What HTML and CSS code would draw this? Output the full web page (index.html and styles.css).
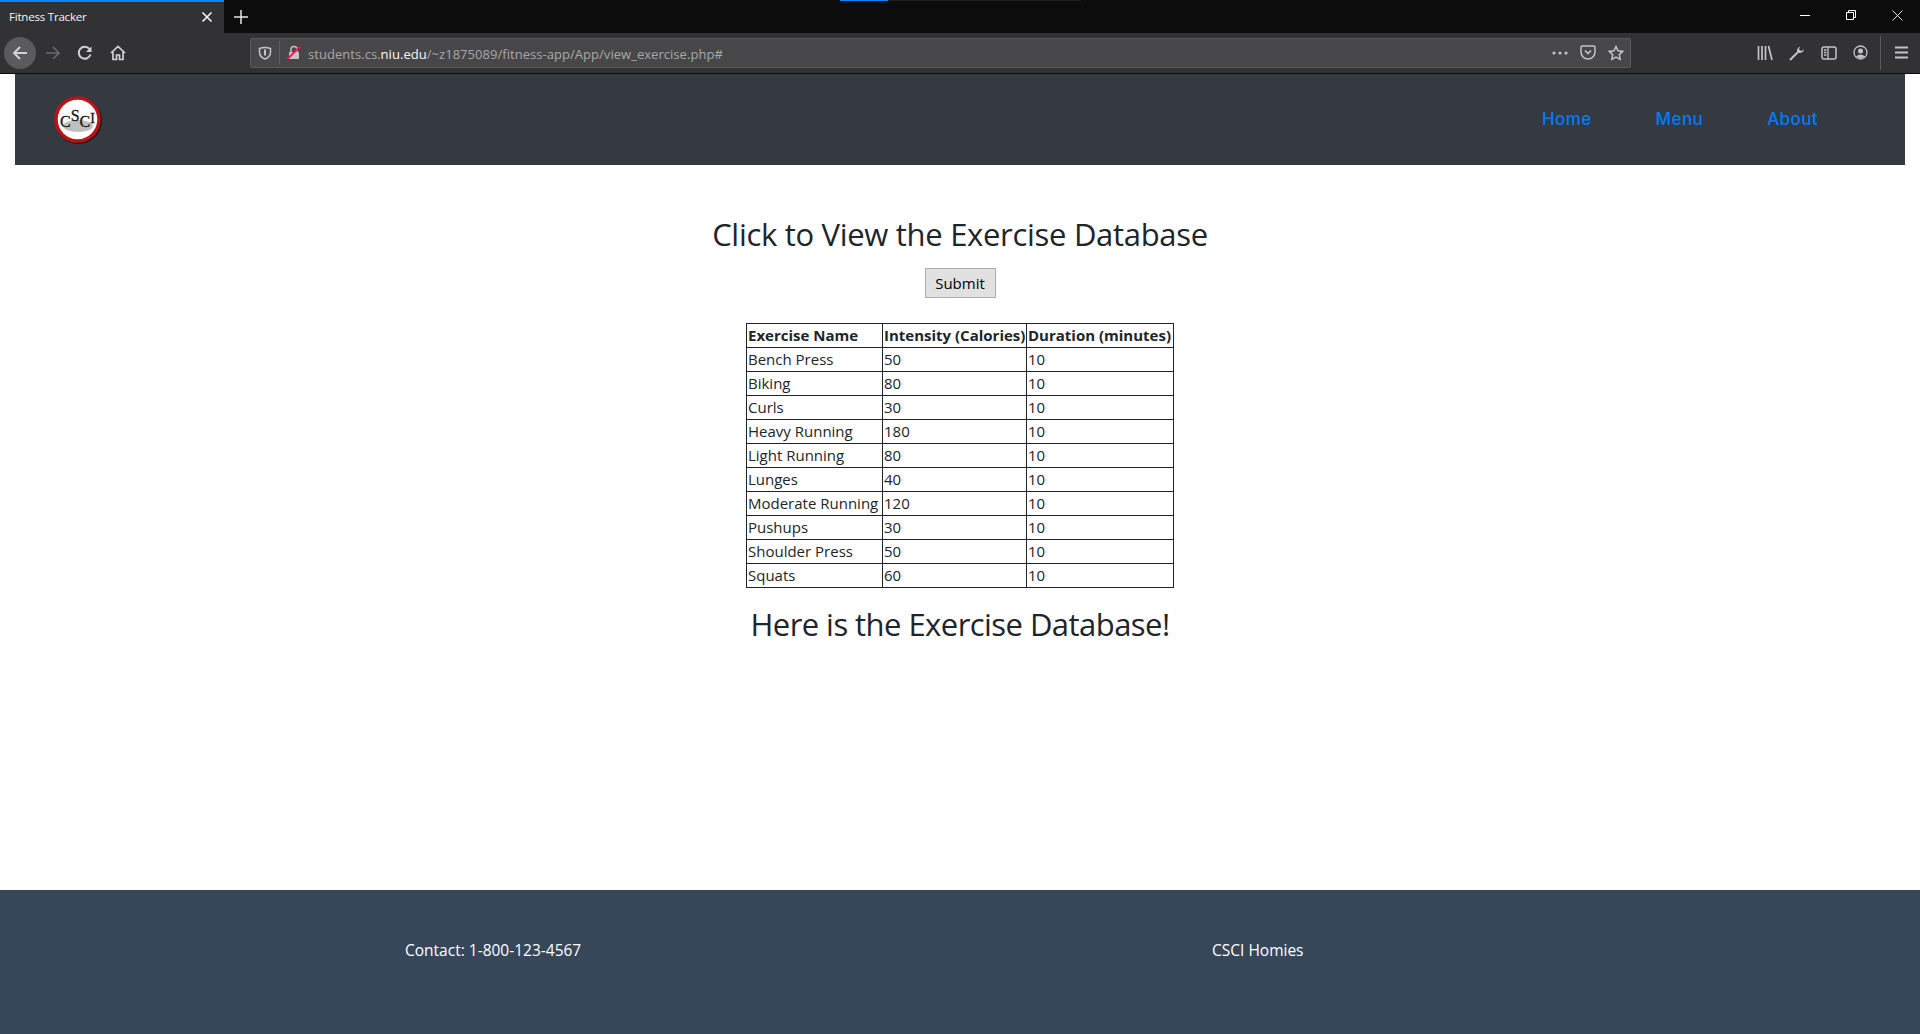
FILE: index.html
```html
<!DOCTYPE html>
<html lang="en">
<head>
<meta charset="utf-8">
<title>Fitness Tracker</title>
<link rel="stylesheet" href="styles.css">
</head>
<body>
<header class="chrome">
  <div class="tabbar">
    <div class="tab">
      <span class="tab-title">Fitness Tracker</span>
      <svg class="tab-close" width="12" height="12" viewBox="0 0 12 12"><path d="M1.500 1.500l9 9M10.500 1.500l-9 9" stroke="#f4f4f4" stroke-width="1.600" fill="none"/></svg>
    </div>
    <svg class="new-tab" width="14" height="14" viewBox="0 0 14 14"><path d="M7 0v14M0 7h14" stroke="#e6e6e6" stroke-width="1.500" fill="none"/></svg>
    <div class="tab-spacer"></div>
    <div class="winctl">
      <svg width="10" height="10" viewBox="0 0 10 10"><path d="M0 5.500h10" stroke="#fff" fill="none"/></svg>
      <svg width="10" height="10" viewBox="0 0 10 10"><path d="M.5 2.500h7v7h-7zM2.500 2.500V.5h7v7h-2" stroke="#fff" fill="none"/></svg>
      <svg width="11" height="11" viewBox="0 0 11 11"><path d="M.5.5l10 10M10.500.5l-10 10" stroke="#fff" stroke-width=".9" fill="none"/></svg>
    </div>
    <div class="loadbar"><span class="loadbar-done"></span></div>
  </div>
  <div class="toolbar">
    <div class="navgroup">
      <span class="tbtn tbtn-active"><svg width="16" height="16" viewBox="0 0 16 16"><path d="M15 8H2M8 2L2 8l6 6" stroke="#d2d2d3" stroke-width="2" fill="none"/></svg></span>
      <span class="tbtn"><svg width="16" height="16" viewBox="0 0 16 16"><path d="M1 8h13M8 2l6 6-6 6" stroke="#6a6a6b" stroke-width="1.700" fill="none"/></svg></span>
      <span class="tbtn"><svg width="16" height="16" viewBox="0 0 16 16"><path d="M13.500 9.500A6 6 0 1 1 12.500 4" stroke="#d2d2d3" stroke-width="2" fill="none"/><path d="M14.500 1.500v5.500H9z" fill="#d2d2d3"/></svg></span>
      <span class="tbtn"><svg width="16" height="16" viewBox="0 0 16 16"><path d="M1 8l7-6.500L15 8M3 7v7.500h3.500V10h3v4.500H13V7" stroke="#d2d2d3" stroke-width="1.700" fill="none"/></svg></span>
    </div>
    <div class="urlbar">
      <svg class="url-shield" width="14" height="14" viewBox="0 0 14 14"><path d="M1.500 2.500Q7 .5 12.500 2.500V6Q12.500 11 7 13 1.500 11 1.500 6z" stroke="#c4c4c5" stroke-width="1.500" fill="none"/><path d="M7 3.500v6" stroke="#c4c4c5" stroke-width="2"/></svg>
      <span class="url-sep"></span>
      <svg class="url-lock" width="14" height="15" viewBox="0 0 14 15"><path d="M4 7V4.500a3 3 0 0 1 6 0V7" stroke="#c4c4c5" stroke-width="1.500" fill="none"/><rect x="2" y="7" width="10" height="7" rx="1" fill="#c4c4c5"/><path d="M.5 14L13 1.500" stroke="#ff0f4d" stroke-width="1.800"/></svg>
      <span class="url-text">students.cs.<b class="url-host">niu.edu</b>/~z1875089/fitness-app/App/view_exercise.php#</span>
      <svg class="url-icon" width="16" height="4" viewBox="0 0 16 4"><circle cx="2" cy="2" r="1.600" fill="#c4c4c5"/><circle cx="8" cy="2" r="1.600" fill="#c4c4c5"/><circle cx="14" cy="2" r="1.600" fill="#c4c4c5"/></svg>
      <svg class="url-icon" width="16" height="15" viewBox="0 0 16 15"><path d="M1 2.500Q1 1 2.500 1h11Q15 1 15 2.500V7a7 7 0 0 1-14 0z" stroke="#c4c4c5" stroke-width="1.500" fill="none"/><path d="M5 5.500l3 3 3-3" stroke="#c4c4c5" stroke-width="1.700" fill="none"/></svg>
      <svg class="url-icon" width="16" height="16" viewBox="0 0 16 16"><path d="M8 1.500l2 4.300 4.700.6-3.400 3.200.9 4.700L8 12l-4.200 2.300.9-4.700L1.300 6.400 6 5.800z" stroke="#c4c4c5" stroke-width="1.500" fill="none"/></svg>
    </div>
    <div class="tools">
      <svg width="16" height="16" viewBox="0 0 16 16"><path d="M1.500 1v14M5 1v14M8.500 1v14M11.500 1l3.500 14" stroke="#c4c4c5" stroke-width="1.700" fill="none"/></svg>
      <svg width="16" height="16" viewBox="0 0 16 16"><path d="M1 15l7.500-7.500" stroke="#c4c4c5" stroke-width="2" fill="none"/><path d="M8 7.500Q7.500 3 11 1.500L10 4.500l2 1.500 3-1.500Q14 8.500 9 8z" fill="#c4c4c5"/></svg>
      <svg width="16" height="14" viewBox="0 0 16 14"><rect x="1" y="1" width="14" height="12" rx="2" stroke="#c4c4c5" stroke-width="1.500" fill="none"/><path d="M7 1v12M3 4h2.500M3 6.500h2.500M3 9h2.500" stroke="#c4c4c5" stroke-width="1.300" fill="none"/></svg>
      <svg width="15" height="15" viewBox="0 0 15 15"><circle cx="7.500" cy="7.500" r="6.500" stroke="#c4c4c5" stroke-width="1.300" fill="none"/><circle cx="7.500" cy="6" r="2.500" fill="#c4c4c5"/><path d="M3 11.500Q7.500 7.500 12 11.500 7.500 14.500 3 11.500z" fill="#c4c4c5"/></svg>
      <span class="tools-sep"></span>
      <svg width="13" height="13" viewBox="0 0 13 13"><path d="M0 1.500h13M0 6.500h13M0 11.500h13" stroke="#c4c4c5" stroke-width="1.800" fill="none"/></svg>
    </div>
  </div>
</header>

<nav class="navbar">
  <svg class="logo" width="50" height="50" viewBox="0 0 50 50">
    <circle cx="25.500" cy="25.500" r="23.500" fill="#1a1a1a"/>
    <circle cx="24.500" cy="24.500" r="21.500" fill="#fff" stroke="#bb1219" stroke-width="3.500"/>
    <ellipse cx="25" cy="31" rx="15" ry="6" fill="#a9a9a9" opacity=".75"/>
    <text class="logo-mark" x="7" y="32">C<tspan class="logo-s" dy="-6">S</tspan><tspan dy="6">C</tspan><tspan class="logo-i" dy="-4">I</tspan></text>
  </svg>
  <ul class="navlinks">
    <li><a class="navlink" href="#">Home</a></li>
    <li><a class="navlink" href="#">Menu</a></li>
    <li><a class="navlink" href="#">About</a></li>
  </ul>
</nav>

<main class="content">
  <h2 class="heading heading-top">Click to View the Exercise Database</h2>
  <button class="submit" type="button">Submit</button>
  <table class="exercises">
    <thead>
      <tr><th>Exercise Name</th><th>Intensity (Calories)</th><th>Duration (minutes)</th></tr>
    </thead>
    <tbody>
      <tr><td>Bench Press</td><td>50</td><td>10</td></tr>
      <tr><td>Biking</td><td>80</td><td>10</td></tr>
      <tr><td>Curls</td><td>30</td><td>10</td></tr>
      <tr><td>Heavy Running</td><td>180</td><td>10</td></tr>
      <tr><td>Light Running</td><td>80</td><td>10</td></tr>
      <tr><td>Lunges</td><td>40</td><td>10</td></tr>
      <tr><td>Moderate Running</td><td>120</td><td>10</td></tr>
      <tr><td>Pushups</td><td>30</td><td>10</td></tr>
      <tr><td>Shoulder Press</td><td>50</td><td>10</td></tr>
      <tr><td>Squats</td><td>60</td><td>10</td></tr>
    </tbody>
  </table>
  <h2 class="heading heading-bottom">Here is the Exercise Database!</h2>
</main>

<footer class="footer">
  <p class="footer-item">Contact: 1-800-123-4567</p>
  <p class="footer-item">CSCI Homies</p>
</footer>
</body>
</html>
```

FILE: styles.css
```css
* { box-sizing: border-box; }
html, body { margin: 0; height: 100%; }
html { overflow: hidden; }
body {
  display: flex;
  flex-direction: column;
  height: 1034px;
  overflow: hidden;
  background: #fff;
  color: #212529;
  font-family: "Open Sans", "Noto Sans", sans-serif;
  font-size: 16px;
}

/* Browser chrome */
.chrome { flex: none; }
.tabbar {
  position: relative;
  display: flex;
  align-items: center;
  height: 33px;
  background: #0c0c0c;
}
.tab {
  display: flex;
  align-items: center;
  justify-content: space-between;
  width: 224px;
  height: 33px;
  padding: 0 11px 2px 9px;
  background: #323234;
  border-top: 2px solid #0a84ff;
}
.tab-title { color: #f4f4f4; font-size: 11.5px; letter-spacing: -.2px; }
.new-tab { margin-left: 10px; }
.tab-spacer { flex: 1; }
.winctl {
  display: flex;
  align-items: center;
  gap: 36px;
  padding-right: 17px;
  margin-top: -3px;
}
.loadbar {
  position: absolute;
  top: 0;
  left: 840px;
  width: 241px;
  height: 1px;
  background: #1f1f1f;
}
.loadbar-done { display: block; width: 48px; height: 1px; background: #0a84ff; }

.toolbar {
  display: flex;
  align-items: center;
  height: 41px;
  padding-bottom: 1px;
  background: #323234;
  border-bottom: 1px solid #0c0c0c;
}
.navgroup {
  display: flex;
  align-items: center;
  gap: .6px;
  width: 250px;
  padding-left: 4px;
}
.tbtn {
  display: flex;
  align-items: center;
  justify-content: center;
  width: 32px;
  height: 32px;
  border-radius: 50%;
}
.tbtn-active { background: #5b5b5d; }
.urlbar {
  display: flex;
  align-items: center;
  flex: 1;
  height: 30px;
  padding: 0 6px 0 7px;
  background: #474749;
  border: 1px solid #5a5a5c;
  border-radius: 2px;
}
.url-sep { width: 1px; height: 24px; margin: 0 7px; background: #5f5f61; }
.url-lock { margin-right: 7px; }
.url-text {
  flex: 1;
  padding-top: 2px;
  color: #a7a7a8;
  font-size: 13px;
  letter-spacing: .04px;
  white-space: nowrap;
}
.url-host { color: #f9f9fa; font-weight: 400; }
.url-icon { margin-left: 12px; }
.tools {
  display: flex;
  align-items: center;
  gap: 16px;
  justify-content: flex-end;
  width: 289px;
  padding-right: 12px;
}
.tools-sep { width: 1px; height: 34px; margin: 0 -2px 0 -4px; background: #5a5a5c; }

/* Page nav */
.navbar {
  display: flex;
  align-items: center;
  justify-content: space-between;
  flex: none;
  height: 91px;
  margin: 0 15px;
  padding: 0 87px 0 38px;
  background: #343a40;
}
.logo { display: block; }
.logo-mark {
  font-family: "Liberation Serif", serif;
  font-size: 16px;
  fill: #161616;
  stroke: #161616;
  stroke-width: .3px;
}
.logo-s { font-size: 16px; }
.logo-i { font-size: 14px; }
.navlinks {
  display: flex;
  gap: 64px;
  margin: 0 0 2px;
  padding: 0;
  list-style: none;
}
.navlink {
  color: #007bff;
  font-family: Inter, "Open Sans", sans-serif;
  font-size: 17px;
  font-weight: 500;
  letter-spacing: .4px;
  text-decoration: none;
}

/* Main */
.content {
  display: flex;
  flex-direction: column;
  align-items: center;
  flex: 1;
  padding-top: 51px;
}
.heading {
  margin: 0;
  font-size: 31px;
  font-weight: 400;
  line-height: 1.2;
  letter-spacing: -.3px;
}
.submit {
  width: 71px;
  height: 30px;
  margin-top: 15px;
  padding: 0;
  background: #e1e1e1;
  border: 1px solid #adadad;
  color: #000;
  font-family: inherit;
  font-size: 15px;
}
.exercises {
  width: 428px;
  margin-top: 25px;
  table-layout: fixed;
  border-collapse: collapse;
  border: 1px solid #212529;
  font-size: 15px;
  line-height: 23px;
}
.exercises th, .exercises td {
  height: 24px;
  padding: 0 1px;
  border: 1px solid #212529;
  text-align: left;
  white-space: nowrap;
}
.exercises th:nth-child(1) { width: 136px; }
.exercises th:nth-child(2) { width: 144px; }
.heading-bottom { margin-top: 18px; letter-spacing: -.55px; }

/* Footer */
.footer {
  display: grid;
  grid-template-columns: 807px 1fr;
  flex: none;
  height: 144px;
  padding: 49px 0 0 405px;
  background: #37475a;
  color: #fff;
  font-size: 15.5px;
}
.footer-item { margin: 0; line-height: 22px; }
```
